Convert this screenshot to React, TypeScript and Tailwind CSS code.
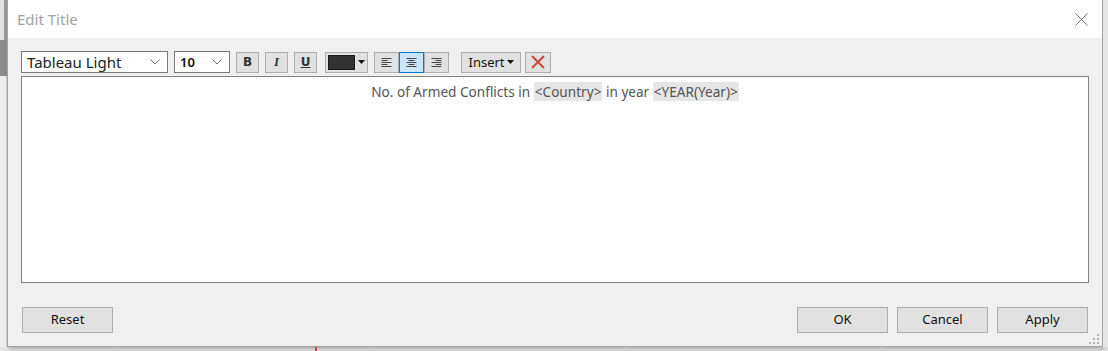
const ui = "font-['Noto_Sans',sans-serif]"

const Chevron = () => (
    <svg width="10" height="6" viewBox="0 0 10 6" className="shrink-0">
        <path d="M0.5 0.5 L5 5 L9.5 0.5" fill="none" stroke="#6d6d6d" strokeWidth="1" />
    </svg>
)

const Caret = () => (
    <svg width="7" height="4" viewBox="0 0 7 4" className="shrink-0">
        <path d="M0 0 H7 L3.5 4 Z" fill="#111" />
    </svg>
)

const AlignIcon = ({ mode }: { mode: "left" | "center" | "right" }) => {
    const rows = [10, 6, 10, 6, 10]
    return (
        <svg width="11" height="9" viewBox="0 0 11 9">
            {rows.map((w, i) => {
                const x = mode === "left" ? 0.5 : mode === "right" ? 10.5 - w : (11 - w) / 2
                return <line key={i} x1={x} x2={x + w} y1={i * 2 + 0.5} y2={i * 2 + 0.5} stroke="#444" strokeWidth="1" />
            })}
        </svg>
    )
}

const FmtButton = ({ children }: { children: React.ReactNode }) => (
    <div className="w-[23px] h-[21px] flex items-center justify-center bg-[#e1e1e1] border border-[#adadad] text-[12px] font-bold text-[#333] font-['DejaVu_Sans',sans-serif]">
        {children}
    </div>
)

const Token = ({ children }: { children: React.ReactNode }) => (
    <span className="bg-[#e6e6e6] px-[1px]">{children}</span>
)

const DialogButton = ({ label }: { label: string }) => (
    <button className="w-[91px] h-[26px] bg-[#e1e1e1] border border-[#adadad] text-[13px] text-[#111]">
        {label}
    </button>
)

const App = () => {

    return (

        <div className={`w-[1108px] h-[351px] overflow-hidden bg-[#e9e9e9] ${ui}`}>

            <div className="flex h-[347px]">
                {/* left strip behind the dialog */}
                <div className="w-[7px] flex flex-col">
                    <div className="h-[40px] bg-[#e0e0e0] border-r-[3px] border-[#9a9a9a]"></div>
                    <div className="h-[36px] bg-[#8c8c8c]"></div>
                    <div className="flex-1 bg-[#eeeeee] border-r border-[#d5d5d5]"></div>
                </div>

                {/* dialog */}
                <div className="w-[1096px] border border-t-0 border-[#a3a3a3] bg-[#f0f0f0] flex flex-col shadow-[2px_2px_4px_rgba(0,0,0,0.25)]">

                    {/* title bar */}
                    <div className="h-[38px] bg-white flex items-center justify-between pl-[9px] pr-[14px]">
                        <span className="text-[15px] text-[#a3a3a3]">Edit Title</span>
                        <svg width="13" height="13" viewBox="0 0 13 13">
                            <path d="M0.5 0.5 L12.5 12.5 M12.5 0.5 L0.5 12.5" stroke="#7a7a7a" strokeWidth="1" />
                        </svg>
                    </div>

                    {/* toolbar */}
                    <div className="flex items-center pl-[13px] pt-[13px] h-[35px]">
                        <div className="w-[147px] h-[22px] bg-white border border-[#7a7a7a] flex items-center justify-between pl-[5px] pr-[7px]">
                            <span className="text-[15px] text-[#222] leading-none">Tableau Light</span>
                            <Chevron />
                        </div>
                        <div className="ml-[6px] w-[56px] h-[22px] bg-white border border-[#7a7a7a] flex items-center justify-between pl-[5px] pr-[7px]">
                            <span className="text-[13px] font-semibold text-[#111] leading-none">10</span>
                            <Chevron />
                        </div>

                        <div className="ml-[6px] flex gap-[6px]">
                            <FmtButton>B</FmtButton>
                            <FmtButton><span className="italic font-['Liberation_Serif',serif] text-[13px]">I</span></FmtButton>
                            <FmtButton><span className="underline">U</span></FmtButton>
                        </div>

                        <div className="ml-[8px] w-[43px] h-[21px] bg-[#e1e1e1] border border-[#adadad] flex items-center gap-[3px] pl-[2px]">
                            <div className="w-[27px] h-[15px] bg-[#333] border border-[#1a1a1a]"></div>
                            <Caret />
                        </div>

                        <div className="ml-[6px] flex">
                            <div className="w-[25px] h-[21px] bg-[#e1e1e1] border border-[#adadad] flex items-center justify-center"><AlignIcon mode="left" /></div>
                            <div className="w-[25px] h-[21px] bg-[#cce4f7] border border-[#0078d7] flex items-center justify-center"><AlignIcon mode="center" /></div>
                            <div className="w-[25px] h-[21px] bg-[#e1e1e1] border border-[#adadad] flex items-center justify-center"><AlignIcon mode="right" /></div>
                        </div>

                        <div className="ml-[12px] w-[60px] h-[21px] bg-[#e1e1e1] border border-[#adadad] flex items-center justify-center gap-[2px]">
                            <span className="text-[13px] text-[#111] leading-none">Insert</span>
                            <Caret />
                        </div>

                        <div className="ml-[4px] w-[26px] h-[21px] bg-[#e1e1e1] border border-[#adadad] flex items-center justify-center">
                            <svg width="14" height="14" viewBox="0 0 14 14">
                                <path d="M1 1 L13 13 M13 1 L1 13" stroke="#d0473b" strokeWidth="2" />
                            </svg>
                        </div>
                    </div>

                    {/* editor */}
                    <div className="mx-[13px] mt-[3px] h-[207px] bg-white border border-[#828282] pt-[5px] text-center text-[13.6px] leading-[19px] text-[#555]">
                        No. of Armed Conflicts in <Token>&lt;Country&gt;</Token> in year <Token>&lt;YEAR(Year)&gt;</Token>
                    </div>

                    {/* footer */}
                    <div className="flex items-start justify-between pl-[14px] pr-[14px] mt-[24px]">
                        <DialogButton label="Reset" />
                        <div className="flex gap-[9px]">
                            <DialogButton label="OK" />
                            <DialogButton label="Cancel" />
                            <DialogButton label="Apply" />
                        </div>
                    </div>

                    <div className="flex justify-end pr-[2px] pt-[1px]">
                        <svg width="11" height="11" viewBox="0 0 11 11">
                            <rect x="8" y="0" width="2" height="2" fill="#b5b5b5" />
                            <rect x="4" y="4" width="2" height="2" fill="#b5b5b5" />
                            <rect x="8" y="4" width="2" height="2" fill="#b5b5b5" />
                            <rect x="0" y="8" width="2" height="2" fill="#b5b5b5" />
                            <rect x="4" y="8" width="2" height="2" fill="#b5b5b5" />
                            <rect x="8" y="8" width="2" height="2" fill="#b5b5b5" />
                        </svg>
                    </div>
                </div>

                <div className="flex-1 bg-[#e6e6e6]"></div>
            </div>

            {/* page content peeking out below the dialog */}
            <div className="flex h-[4px] bg-[#e4e4e4]">
                <div className="w-[115px] border-r border-[#c8c8c8]"></div>
                <div className="w-[202px] border-r-2 border-[#d24b4b]"></div>
                <div className="w-[54px] border-r border-[#c8c8c8] border-l-0"></div>
                <div className="w-[255px] border-r border-[#c8c8c8]"></div>
                <div className="w-[256px] border-r border-[#c8c8c8]"></div>
            </div>
        </div>

    )
}

export default App
